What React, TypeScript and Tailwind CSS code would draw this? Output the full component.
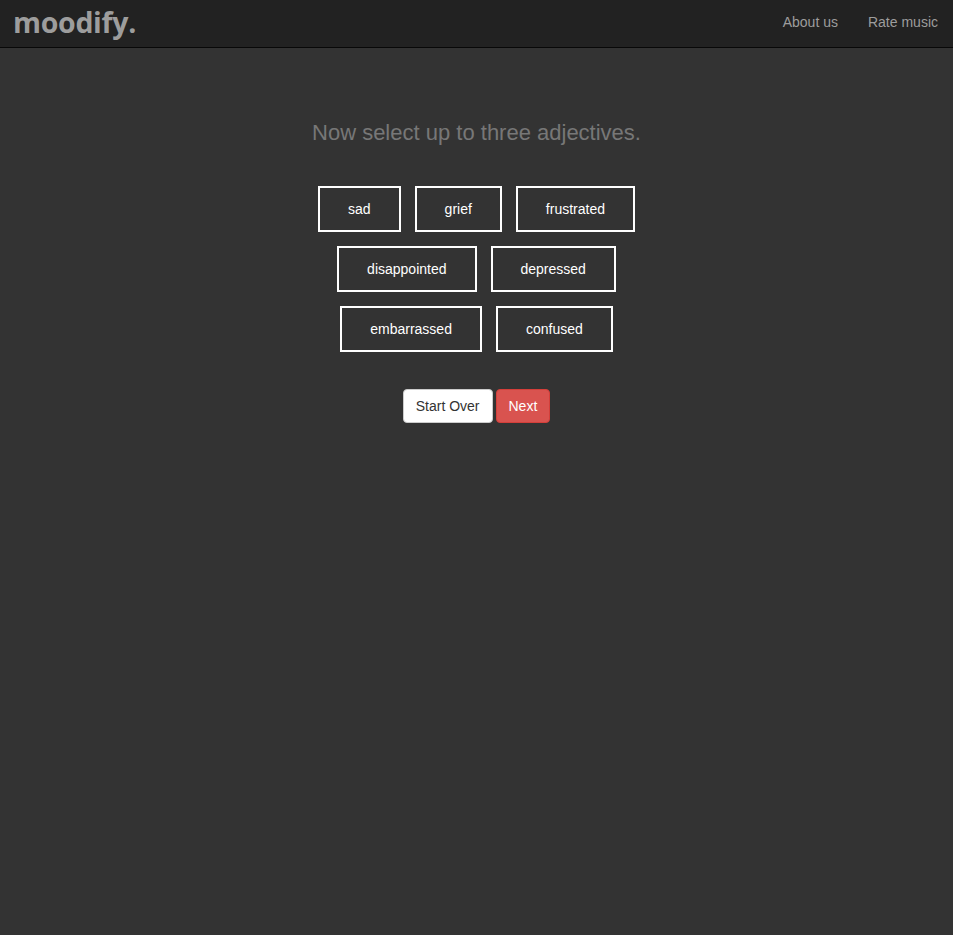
import { useState } from 'react';

const rows: string[][] = [
  ['sad', 'grief', 'frustrated'],
  ['disappointed', 'depressed'],
  ['embarrassed', 'confused'],
];

export default function App() {
  const [selected, setSelected] = useState<string[]>([]);

  const toggle = (word: string) => {
    setSelected((prev) =>
      prev.includes(word) ? prev.filter((w) => w !== word) : prev.length < 3 ? [...prev, word] : prev
    );
  };

  return (
    <div className="min-h-screen bg-[#333333] font-['Liberation_Sans',Arial,sans-serif]">
      {/* ナビバー */}
      <nav className="h-[48px] bg-[#222222] border-b border-[#080808] flex items-center justify-between">
        <span className="pl-[13px] text-[28.5px] font-bold text-[#9d9d9d] font-['Open_Sans',sans-serif] tracking-[-0.3px] leading-none -mt-[2px]">
          moodify.
        </span>
        <div className="flex text-[14px] text-[#9d9d9d] -mt-[2px] pr-[0px]">
          <a className="px-[15px]">About us</a>
          <a className="px-[15px]">Rate music</a>
        </div>
      </nav>

      <div className="flex flex-col items-center pt-[72px]">
        <h2 className="text-[22px] text-[#777777] leading-[26px]">Now select up to three adjectives.</h2>

        <div className="mt-[40px] flex flex-col items-center gap-[14px]">
          {rows.map((row, i) => (
            <div key={i} className="flex gap-[14px]">
              {row.map((word) => (
                <button
                  key={word}
                  onClick={() => toggle(word)}
                  className={`h-[46px] px-[28px] border-2 border-white text-[14px] text-white ${
                    selected.includes(word) ? 'bg-[#555555]' : 'bg-transparent'
                  }`}
                >
                  {word}
                </button>
              ))}
            </div>
          ))}
        </div>

        <div className="mt-[37px] flex gap-[3px]">
          <button className="h-[34px] px-[12px] bg-white border border-[#cccccc] rounded-[4px] text-[14px] text-[#333333]">
            Start Over
          </button>
          <button className="h-[34px] px-[12px] bg-[#d9534f] border border-[#d43f3a] rounded-[4px] text-[14px] text-white">
            Next
          </button>
        </div>
      </div>
    </div>
  );
}
